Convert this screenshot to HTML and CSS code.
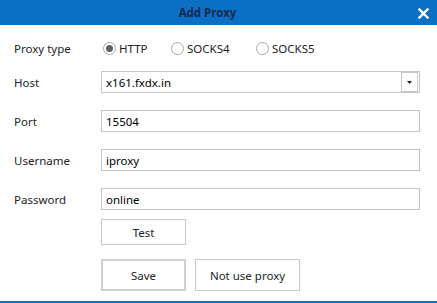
FILE: index.html
```html
<!DOCTYPE html>
<html>
<head>
<meta charset="utf-8">
<link rel="stylesheet" href="styles.css">
</head>
<body>
<div class="dialog">
  <div class="titlebar">
    <span class="title">Add Proxy</span>
    <span class="close">
      <svg width="11" height="11" viewBox="0 0 11 11"><path d="M1.5 1.5 L9.5 9.5 M9.5 1.5 L1.5 9.5" stroke="#fff" stroke-width="2.4" stroke-linecap="square"/></svg>
    </span>
  </div>
  <div class="form">
    <div class="row row-type">
      <span class="label">Proxy type</span>
      <div class="options">
        <label class="opt opt-http"><span class="radio checked"></span>HTTP</label>
        <label class="opt opt-s4"><span class="radio"></span>SOCKS4</label>
        <label class="opt"><span class="radio"></span>SOCKS5</label>
      </div>
    </div>
    <div class="row">
      <span class="label">Host</span>
      <div class="field combo"><span class="value">x161.fxdx.in</span><span class="drop"><svg width="5" height="3" viewBox="0 0 5 3"><path d="M0 0 H5 L2.5 3 Z" fill="#222"/></svg></span></div>
    </div>
    <div class="row">
      <span class="label">Port</span>
      <div class="field"><span class="value">15504</span></div>
    </div>
    <div class="row">
      <span class="label">Username</span>
      <div class="field"><span class="value">iproxy</span></div>
    </div>
    <div class="row">
      <span class="label">Password</span>
      <div class="field"><span class="value">online</span></div>
    </div>
    <div class="btnrow btnrow-test">
      <button class="btn">Test</button>
    </div>
    <div class="btnrow btnrow-save">
      <button class="btn btn-default">Save</button>
      <button class="btn btn-wide">Not use proxy</button>
    </div>
  </div>
</div>
</body>
</html>
```

FILE: styles.css
```css
html, body {
  margin: 0;
  padding: 0;
  background: #fff;
}
.dialog {
  width: 437px;
  height: 303px;
  box-sizing: border-box;
  border-bottom: 2px solid #1b6fb6;
  font-family: "Noto Sans", "Open Sans", sans-serif;
  font-size: 11.5px;
  color: #222;
  display: flex;
  flex-direction: column;
}
.titlebar {
  height: 25px;
  background: #0b70c4;
  display: flex;
  align-items: center;
  justify-content: center;
  position: relative;
}
.title {
  font-weight: bold;
  color: #16284c;
  font-size: 11.5px;
  margin-right: 22px;
}
.close {
  position: absolute;
  right: 8px;
  top: 8px;
  width: 11px;
  height: 11px;
  display: flex;
}
.form {
  padding: 12px 0 0 14px;
  display: flex;
  flex-direction: column;
}
.row {
  display: flex;
  align-items: center;
  height: 22px;
  margin-bottom: 17px;
}
.row-type {
  margin-bottom: 12px;
}
.label {
  width: 87px;
  flex: none;
}
.options {
  display: flex;
  align-items: center;
  padding-left: 2px;
}
.opt {
  display: flex;
  align-items: center;
  gap: 3px;
}
.opt-http { width: 68px; }
.opt-s4 { width: 85px; }
.radio {
  width: 11px;
  height: 11px;
  border: 1px solid #a8a8a8;
  border-radius: 50%;
  box-sizing: content-box;
  display: flex;
  align-items: center;
  justify-content: center;
  background: #fff;
}
.radio.checked::after {
  content: "";
  width: 7px;
  height: 7px;
  border-radius: 50%;
  background: #606060;
}
.field {
  width: 319px;
  height: 22px;
  box-sizing: border-box;
  border: 1px solid #c4c4c4;
  display: flex;
  align-items: center;
  padding-left: 4px;
  color: #000;
}
.value {
  flex: 1;
}
.combo {
  padding-right: 1px;
}
.drop {
  width: 17px;
  height: 20px;
  box-sizing: border-box;
  border: 1px solid #c8c8c8;
  display: flex;
  align-items: center;
  justify-content: center;
}
.btnrow {
  display: flex;
  padding-left: 87px;
  gap: 9px;
}
.btnrow-test {
  margin-top: -8px;
  margin-bottom: 14px;
}
.btn {
  font-family: inherit;
  font-size: 11.5px;
  color: #222;
  background: #fff;
  border: 1px solid #c8c8c8;
  width: 85px;
  height: 26px;
  padding: 0;
  margin: 0;
}
.btnrow-save .btn {
  height: 32px;
}
.btn-default {
  border: 2px solid #cfcfcf;
}
.btn-wide {
  width: 105px;
}
```
